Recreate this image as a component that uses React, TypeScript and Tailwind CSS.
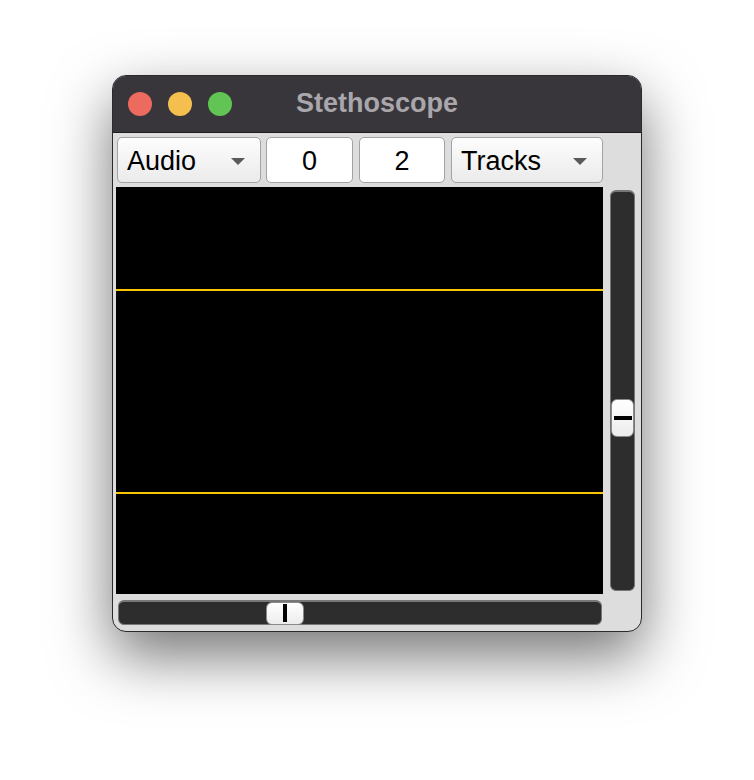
import React from "react";

const font = { fontFamily: '"Liberation Sans", Arial, sans-serif' };

function Caret() {
  return (
    <svg width="14" height="7" viewBox="0 0 14 7" className="shrink-0">
      <path d="M0 0 L14 0 L7 7 Z" fill="#5a5a5a" />
    </svg>
  );
}

function PopUp({ label, cls }: { label: string; cls: string }) {
  return (
    <div
      className={`${cls} h-[46px] flex items-center justify-between pl-[9px] pr-[15px] pt-[2px] rounded-[5px] border-[1.5px] border-[#a2a2a2] bg-gradient-to-b from-[#fdfdfd] to-[#ebebeb] text-[27px] text-black`}
    >
      <span className="leading-none">{label}</span>
      <Caret />
    </div>
  );
}

function Field({ value, cls }: { value: string; cls: string }) {
  return (
    <div
      className={`${cls} h-[46px] flex items-center justify-center pt-[2px] rounded-[5px] border-[1.5px] border-[#a2a2a2] bg-white text-[27px] text-black`}
    >
      <span className="leading-none">{value}</span>
    </div>
  );
}

export default function App() {
  return (
    <div className="w-[754px] h-[780px] bg-white pt-[75px] pl-[112px]" style={font}>
      <div className="w-[530px] h-[557px] rounded-[14px] overflow-hidden border border-[#2a2a2a] bg-[#dddddd] shadow-[0_24px_60px_rgba(0,0,0,0.55)] flex flex-col">
        {/* Title bar */}
        <div className="relative h-[57px] shrink-0 bg-[#38363b] border-b border-[#1e1e1e] flex items-center">
          <div className="flex items-center gap-[16px] pl-[15px]">
            <div className="w-[24px] h-[24px] rounded-full bg-[#ec6a5e]" />
            <div className="w-[24px] h-[24px] rounded-full bg-[#f4bf4f]" />
            <div className="w-[24px] h-[24px] rounded-full bg-[#61c454]" />
          </div>
          <div className="absolute inset-0 flex items-center justify-center text-[27px] font-bold text-[#a9a7ab] pb-[1px]">
            Stethoscope
          </div>
        </div>

        {/* Body */}
        <div className="flex flex-col pl-[3px]">
          <div className="flex items-center mt-[4px] ml-[1px]">
            <PopUp label="Audio" cls="w-[144px]" />
            <Field value="0" cls="w-[87px] ml-[5px]" />
            <Field value="2" cls="w-[86px] ml-[6px]" />
            <PopUp label="Tracks" cls="w-[152px] ml-[6px]" />
          </div>

          <div className="flex mt-[4px]">
            <div className="w-[487px] h-[407px] bg-black flex flex-col">
              <div className="h-[102px]" />
              <div className="h-[2px] bg-[#f7c600]" />
              <div className="h-[201px]" />
              <div className="h-[2px] bg-[#f7c600]" />
            </div>
            <div className="ml-[7px] mt-[3px] w-[25px] h-[401px] rounded-[6px] bg-[#2d2d2d] border-t-[2px] border-x border-b border-[#777777] flex flex-col items-center">
              <div className="h-[207px]" />
              <div className="w-[23px] h-[38px] rounded-[6px] border border-[#8a8a8a] bg-gradient-to-b from-[#ffffff] to-[#ececec] flex items-center justify-center">
                <div className="w-[18px] h-[4px] bg-black" />
              </div>
            </div>
          </div>

          <div className="mt-[6px] ml-[2px] w-[484px] h-[25px] rounded-[6px] bg-[#2d2d2d] border-t-[2px] border-x border-b border-[#777777] flex items-center">
            <div className="w-[147px]" />
            <div className="w-[38px] h-[23px] rounded-[6px] border border-[#8a8a8a] bg-gradient-to-b from-[#ffffff] to-[#ececec] flex items-center justify-center">
              <div className="w-[4px] h-[18px] bg-black" />
            </div>
          </div>
        </div>
      </div>
    </div>
  );
}
